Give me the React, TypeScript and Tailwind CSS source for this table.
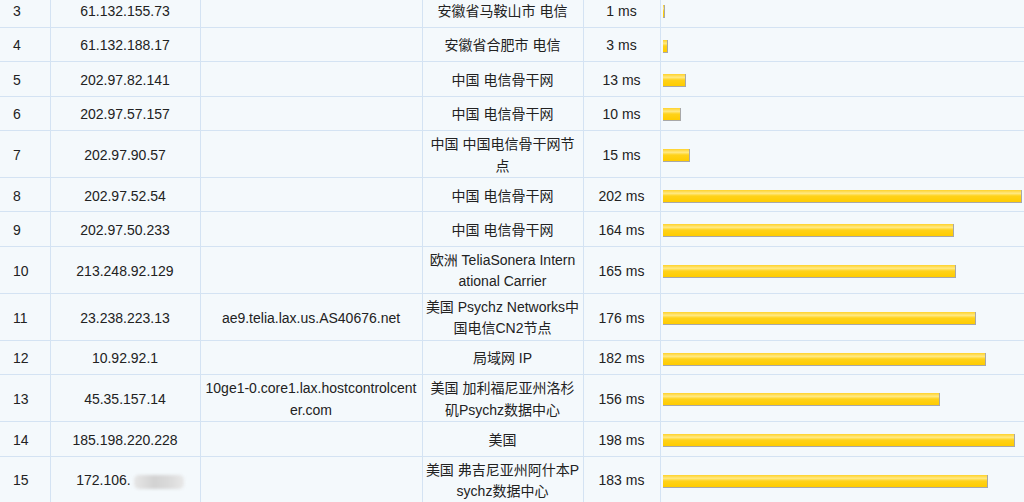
type Hop = {
  n: number
  ip: string
  masked?: boolean
  host: string
  loc: string
  ms: number
}

const hops: Hop[] = [
  { n: 3, ip: '61.132.155.73', host: '', loc: '安徽省马鞍山市 电信', ms: 1 },
  { n: 4, ip: '61.132.188.17', host: '', loc: '安徽省合肥市 电信', ms: 3 },
  { n: 5, ip: '202.97.82.141', host: '', loc: '中国 电信骨干网', ms: 13 },
  { n: 6, ip: '202.97.57.157', host: '', loc: '中国 电信骨干网', ms: 10 },
  { n: 7, ip: '202.97.90.57', host: '', loc: '中国 中国电信骨干网节点', ms: 15 },
  { n: 8, ip: '202.97.52.54', host: '', loc: '中国 电信骨干网', ms: 202 },
  { n: 9, ip: '202.97.50.233', host: '', loc: '中国 电信骨干网', ms: 164 },
  { n: 10, ip: '213.248.92.129', host: '', loc: '欧洲 TeliaSonera Intern\national Carrier', ms: 165 },
  { n: 11, ip: '23.238.223.13', host: 'ae9.telia.lax.us.AS40676.net', loc: '美国 Psychz Networks中国电信CN2节点', ms: 176 },
  { n: 12, ip: '10.92.92.1', host: '', loc: '局域网 IP', ms: 182 },
  { n: 13, ip: '45.35.157.14', host: '10ge1-0.core1.lax.hostcontrolcenter.com', loc: '美国 加利福尼亚州洛杉矶Psychz数据中心', ms: 156 },
  { n: 14, ip: '185.198.220.228', host: '', loc: '美国', ms: 198 },
  { n: 15, ip: '172.106.', masked: true, host: '', loc: '美国 弗吉尼亚州阿什本Psychz数据中心', ms: 183 },
]

// longest hop fills the bar column
const MAX_MS = 202
const MAX_BAR = 359

const cell = 'border-r border-b border-[#d4e3f3] pt-[3px] pb-0 align-middle break-all'

export default function App() {
  return (
    <div
      className="w-[1024px] h-[502px] overflow-hidden bg-[#f4f9fc] text-[14px] leading-[21.5px] text-[#222]"
      style={{ fontFamily: '"Liberation Sans", "Noto Sans CJK SC", sans-serif' }}
    >
      <table className="-mt-[7px] w-[1024px] table-fixed border-collapse">
        <colgroup>
          <col className="w-[50px]" />
          <col className="w-[150px]" />
          <col className="w-[222px]" />
          <col className="w-[161px]" />
          <col className="w-[77px]" />
          <col className="w-[364px]" />
        </colgroup>
        <tbody>
          {hops.map((h) => (
            <tr key={h.n} className="h-[34.4px]">
              <td className={`${cell} pl-[13px] text-left`}>{h.n}</td>
              <td className={`${cell} ${h.masked ? 'pl-[14px] pr-[4px]' : 'px-[4px]'} text-center`}>
                {h.ip}
                {h.masked && (
                  <span className="ml-[3px] inline-block w-[50px] h-[14px] align-middle rounded-[5px] bg-[linear-gradient(to_right,#e6e6e6,#d2d2d2_40%,#dadada_70%,#e8e8e8)] blur-[1.5px]" />
                )}
              </td>
              <td className={`${cell} px-[4px] text-center`}>{h.host}</td>
              <td className={`${cell} px-[2px] text-center whitespace-pre-line`}>{h.loc}</td>
              <td className={`${cell} px-[2px] text-center`}>{h.ms} ms</td>
              <td className="border-b border-[#d4e3f3] pl-[2px] pt-[3px] align-middle">
                <div
                  className="h-[13px] border-b border-r border-[#a8a8a8] bg-[linear-gradient(to_bottom,#ffd22a_0%,#ffe983_28%,#ffd21a_50%,#ffcc00_100%)]"
                  style={{ width: Math.max(2, Math.round((h.ms * MAX_BAR) / MAX_MS)) }}
                />
              </td>
            </tr>
          ))}
        </tbody>
      </table>
    </div>
  )
}
